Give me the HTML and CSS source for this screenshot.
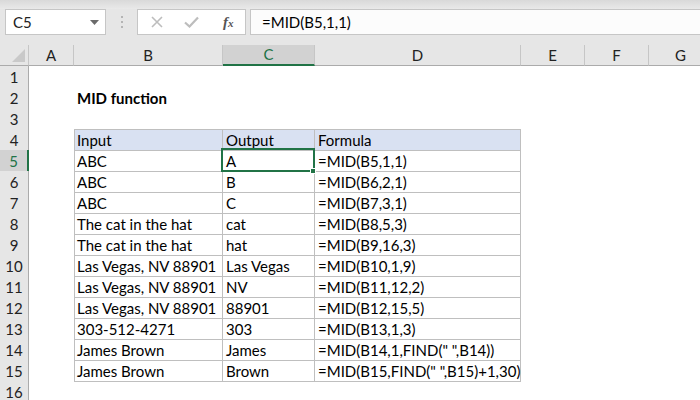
FILE: index.html
```html
<!DOCTYPE html>
<html>
<head>
<meta charset="utf-8">
<link rel="stylesheet" href="styles.css">
</head>
<body>
<div class="app">
  <div class="ribbon-edge"></div>
  <div class="fbar">
    <div class="namebox">
      <span class="ref">C5</span>
      <svg class="caret" width="9" height="5" viewBox="0 0 9 5"><path d="M0 0h9L4.5 5z" fill="#6b6b6b"/></svg>
    </div>
    <div class="grip"><i></i><i></i><i></i></div>
    <div class="btnbox">
      <svg class="ico" width="12" height="12" viewBox="0 0 12 12"><path d="M1 1L11 11M11 1L1 11" stroke="#bdbdbd" stroke-width="1.6" fill="none"/></svg>
      <svg class="ico" width="15" height="12" viewBox="0 0 15 12"><path d="M1 6.5L5.5 10.5L14 1.5" stroke="#bdbdbd" stroke-width="2.2" fill="none"/></svg>
      <span class="fx">f<span class="x">x</span></span>
    </div>
    <div class="finput">=MID(B5,1,1)</div>
  </div>
  <div class="gap"></div>
  <div class="sheet">
    <div class="row hdr">
      <div class="corner"><span class="tri"></span></div>
      <div class="ch">A</div><div class="ch">B</div><div class="ch sel">C</div><div class="ch">D</div><div class="ch">E</div><div class="ch">F</div><div class="ch">G</div>
    </div>
    <div class="row"><div class="rh">1</div><div></div><div></div><div></div><div></div><div></div><div></div><div></div></div>
    <div class="row"><div class="rh">2</div><div></div><div class="title">MID function</div><div></div><div></div><div></div><div></div><div></div></div>
    <div class="row"><div class="rh">3</div><div></div><div></div><div></div><div></div><div></div><div></div><div></div></div>
    <div class="row"><div class="rh">4</div><div></div><div class="t th first">Input</div><div class="t th">Output</div><div class="t th">Formula</div><div></div><div></div><div></div></div>
    <div class="row"><div class="rh rsel">5</div><div></div><div class="t first">ABC</div><div class="t active">A<span class="selbox"></span><span class="handle"></span></div><div class="t">=MID(B5,1,1)</div><div></div><div></div><div></div></div>
    <div class="row"><div class="rh">6</div><div></div><div class="t first">ABC</div><div class="t">B</div><div class="t">=MID(B6,2,1)</div><div></div><div></div><div></div></div>
    <div class="row"><div class="rh">7</div><div></div><div class="t first">ABC</div><div class="t">C</div><div class="t">=MID(B7,3,1)</div><div></div><div></div><div></div></div>
    <div class="row"><div class="rh">8</div><div></div><div class="t first">The cat in the hat</div><div class="t">cat</div><div class="t">=MID(B8,5,3)</div><div></div><div></div><div></div></div>
    <div class="row"><div class="rh">9</div><div></div><div class="t first">The cat in the hat</div><div class="t">hat</div><div class="t">=MID(B9,16,3)</div><div></div><div></div><div></div></div>
    <div class="row"><div class="rh">10</div><div></div><div class="t first">Las Vegas, NV 88901</div><div class="t">Las Vegas</div><div class="t">=MID(B10,1,9)</div><div></div><div></div><div></div></div>
    <div class="row"><div class="rh">11</div><div></div><div class="t first">Las Vegas, NV 88901</div><div class="t">NV</div><div class="t">=MID(B11,12,2)</div><div></div><div></div><div></div></div>
    <div class="row"><div class="rh">12</div><div></div><div class="t first">Las Vegas, NV 88901</div><div class="t">88901</div><div class="t">=MID(B12,15,5)</div><div></div><div></div><div></div></div>
    <div class="row"><div class="rh">13</div><div></div><div class="t first">303-512-4271</div><div class="t">303</div><div class="t">=MID(B13,1,3)</div><div></div><div></div><div></div></div>
    <div class="row"><div class="rh">14</div><div></div><div class="t first">James Brown</div><div class="t">James</div><div class="t">=MID(B14,1,FIND(" ",B14))</div><div></div><div></div><div></div></div>
    <div class="row"><div class="rh">15</div><div></div><div class="t first">James Brown</div><div class="t">Brown</div><div class="t">=MID(B15,FIND(" ",B15)+1,30)</div><div></div><div></div><div></div></div>
    <div class="row"><div class="rh">16</div><div></div><div></div><div></div><div></div><div></div><div></div><div></div></div>
  </div>
</div>
</body>
</html>
```
FILE: styles.css
```css
* { box-sizing: border-box; }
html, body { margin: 0; padding: 0; }
body { background: #e6e6e6; font-family: Lato, "Open Sans", sans-serif; color: #000; }
.app { width: 700px; height: 400px; overflow: hidden; background: #e6e6e6; }
.ribbon-edge { height: 9px; background: linear-gradient(#d9d9d9, #e9e9e9); }
.fbar { height: 26px; display: flex; }
.namebox { margin-left: 5px; width: 101px; background: #fff; border: 1px solid #c6c6c6; display: flex; align-items: center; justify-content: space-between; padding: 0 6px 0 7px; font-size: 15px; color: #222; }
.caret { margin-top: 1px; }
.grip { width: 31px; display: flex; flex-direction: column; align-items: center; justify-content: center; gap: 3px; }
.grip i { width: 2px; height: 2px; background: #b4b4b4; display: block; }
.btnbox { width: 109px; background: #fff; border: 1px solid #c6c6c6; display: flex; align-items: center; padding-left: 13px; gap: 0; }
.btnbox .ico:first-child { margin-right: 21px; }
.btnbox .ico:nth-child(2) { margin-right: 24px; }
.fx { font-family: "Liberation Serif", serif; font-style: italic; font-size: 15px; color: #555; font-weight: bold; }
.fx .x { font-size: 11px; }
.finput { flex: 1; margin-left: 4px; margin-right: -2px; background: #fcfcfc; border: 1px solid #c6c6c6; font-size: 15px; padding: 0 0 0 11px; line-height: 24px; color: #000; }
.gap { height: 10px; }
.sheet { background: #fff; }
.row { display: grid; grid-template-columns: 29px 45px 149px 92px 206px 64px 64px 64px; height: 21px; font-size: 15px; }
.row > div { line-height: 20px; padding: 1px 3px 0; white-space: nowrap; overflow: visible; }
.hdr { background: #e6e6e6; }
.hdr > div { border-bottom: 1px solid #ababab; border-right: 1px solid #c6c6c6; text-align: center; color: #222; padding: 0; }
.corner { position: relative; }
.tri { position: absolute; right: 3px; bottom: 3px; width: 0; height: 0; border-left: 13px solid transparent; border-bottom: 13px solid #c9c9c9; }
.ch.sel { background: #d2d2d2; border-bottom: 2px solid #217346; color: #217346; line-height: 19px; }
.rh { background: #e6e6e6; border-right: 1px solid #ababab; border-bottom: 1px solid #d9d9d9; text-align: center; color: #222; padding: 1px 0 0 !important; }
.rh.rsel { background: #d2d2d2; border-right: 2px solid #217346; color: #217346; }
.title { font-weight: bold; }
.t { border-right: 1px solid #bfbfbf; border-bottom: 1px solid #bfbfbf; }
.t.first { border-left: 1px solid #bfbfbf; padding-left: 2px !important; }
.th { background: #d9e1f2; border-top: 1px solid #bfbfbf; padding-top: 0 !important; }
.active { position: relative; }
.selbox { position: absolute; left: -2px; top: -2px; right: -1px; bottom: -1px; border: 2px solid #217346; }
.handle { position: absolute; right: -2px; bottom: -3px; width: 6px; height: 6px; background: #217346; border: 1px solid #fff; }
```
